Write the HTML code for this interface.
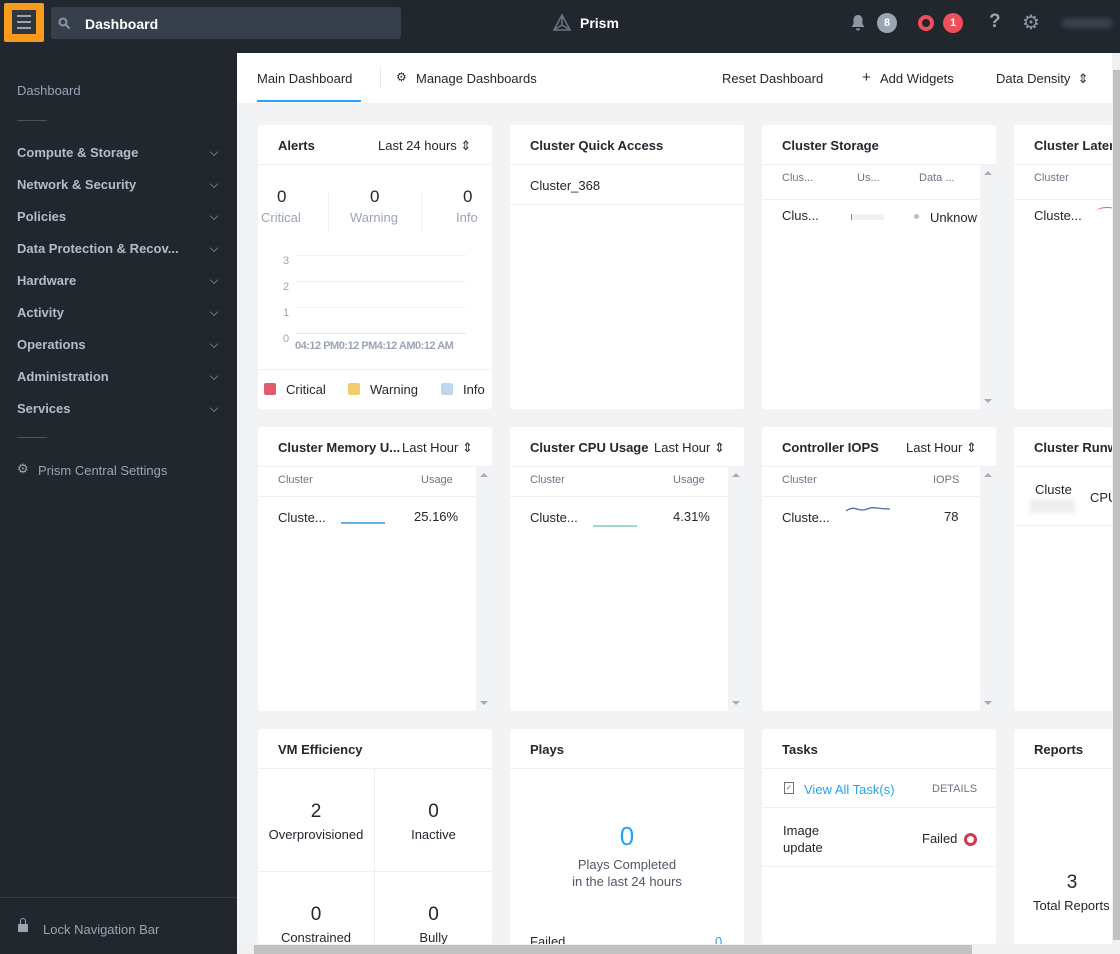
<!DOCTYPE html>
<html><head><meta charset="utf-8"><style>
*{box-sizing:border-box;margin:0;padding:0}
body{width:1120px;height:954px;overflow:hidden;font-family:"Liberation Sans",sans-serif;background:#f2f3f5;position:relative;font-size:13px;color:#22272e}
.a{position:absolute}
.top{left:0;top:0;width:1120px;height:53px;background:#22272e}
.side{position:absolute;left:0;top:46px;width:237px;height:908px;background:#22272e}
.side .it{position:absolute;left:17px;color:#b2bccb;font-size:13px;font-weight:bold;width:205px}
.side .it:after{content:"";position:absolute;right:5px;top:4px;width:5px;height:5px;border-right:1.3px solid #6b7583;border-bottom:1.3px solid #6b7583;transform:rotate(45deg)}
.card{position:absolute;background:#fff;border-radius:3px;overflow:hidden}
.card .h{position:absolute;left:20px;top:13px;font-size:13px;font-weight:bold;color:#22272e;white-space:nowrap}
.card .hl{position:absolute;left:0;right:0;top:39px;height:1px;background:#eef0f2}
.grey{color:#6b7583}
.sb{position:absolute;width:16px;background:#f2f3f5}
.sb:before{content:"";position:absolute;left:4px;top:6px;border:4px solid transparent;border-bottom:4px solid #aab;border-top:0}
.sb:after{content:"";position:absolute;left:4px;bottom:6px;border:4px solid transparent;border-top:4px solid #aab;border-bottom:0}
</style></head><body>
<div class="a top"></div>
<div class="a" style="left:4px;top:3px;width:40px;height:39px;background:#f89b1c;border-radius:2px"></div>
<div class="a" style="left:12px;top:10px;width:24px;height:24px;background:#303640"></div>
<div class="a" style="left:17px;top:15px;width:14px;height:2px;background:#9aa5b4;box-shadow:0 6px 0 #9aa5b4,0 12px 0 #9aa5b4"></div>
<div class="a" style="left:51px;top:7px;width:350px;height:32px;background:#373f4a;border-radius:3px"></div>
<svg class="a" style="left:58px;top:17px" width="13" height="13"><circle cx="5" cy="5" r="3.5" stroke="#8d96a3" stroke-width="2" fill="none"/><line x1="8" y1="8" x2="11.5" y2="11.5" stroke="#8d96a3" stroke-width="2"/></svg>
<div class="a" style="left:85px;top:16px;color:#fff;font-size:14px;font-weight:bold">Dashboard</div>
<svg class="a" style="left:552px;top:13px" width="20" height="20"><path d="M10 2 L2 17 L18 17 Z M10 2 L10 12 L2 17 M10 12 L18 17" stroke="#6b7583" stroke-width="1.5" fill="none"/></svg>
<div class="a" style="left:580px;top:15px;color:#fff;font-size:14px;font-weight:bold">Prism</div>
<svg class="a" style="left:850px;top:14px" width="16" height="17"><path d="M8 1C5 1 3.5 3.5 3.5 6V10L1.5 13H14.5L12.5 10V6C12.5 3.5 11 1 8 1Z M6 14.5a2 2 0 0 0 4 0Z" fill="#8d96a3"/></svg>
<div class="a" style="left:877px;top:13px;width:20px;height:20px;border-radius:50%;background:#9aa5b4;color:#fff;font-size:11px;font-weight:bold;text-align:center;line-height:20px">8</div>
<div class="a" style="left:918px;top:15px;width:16px;height:16px;border-radius:50%;border:4px solid #ef4f5a"></div>
<div class="a" style="left:943px;top:13px;width:20px;height:20px;border-radius:50%;background:#ef4f5a;color:#fff;font-size:11px;font-weight:bold;text-align:center;line-height:20px">1</div>
<div class="a" style="left:989px;top:11px;color:#9aa5b4;font-size:19px;font-weight:bold">?</div>
<div class="a" style="left:1022px;top:10px;color:#8d96a3;font-size:20px">⚙</div>
<div class="a" style="left:1062px;top:18px;width:50px;height:10px;background:#3a414c;border-radius:4px;filter:blur(2px)"></div>

<div class="side">
<div class="it" style="top:99px">Compute &amp; Storage</div>
<div class="it" style="top:131px">Network &amp; Security</div>
<div class="it" style="top:163px">Policies</div>
<div class="it" style="top:195px">Data Protection &amp; Recov...</div>
<div class="it" style="top:227px">Hardware</div>
<div class="it" style="top:259px">Activity</div>
<div class="it" style="top:291px">Operations</div>
<div class="it" style="top:323px">Administration</div>
<div class="it" style="top:355px">Services</div>
</div>
<div class="a" style="left:17px;top:83px;color:#9aa5b4;font-size:13px">Dashboard</div>
<div class="a" style="left:17px;top:120px;width:30px;height:1px;background:#4a525e"></div>
<div class="a" style="left:17px;top:437px;width:30px;height:1px;background:#4a525e"></div>
<div class="a" style="left:17px;top:461px;color:#9aa5b4;font-size:13px">⚙</div>
<div class="a" style="left:38px;top:463px;color:#9aa5b4;font-size:13px">Prism Central Settings</div>
<div class="a" style="left:0;top:897px;width:237px;height:1px;background:#353c47"></div>
<div class="a" style="left:18px;top:924px;width:10px;height:8px;background:#9aa5b4;border-radius:1px"></div>
<div class="a" style="left:20px;top:918px;width:6px;height:8px;border:1.5px solid #9aa5b4;border-radius:3px 3px 0 0"></div>
<div class="a" style="left:43px;top:922px;color:#9aa5b4;font-size:13px">Lock Navigation Bar</div>

<div class="a" style="left:237px;top:53px;width:875px;height:50px;background:#fff"></div>
<div class="a" style="left:257px;top:71px;font-size:13px">Main Dashboard</div>
<div class="a" style="left:257px;top:100px;width:104px;height:2px;background:#22a5f7"></div>
<div class="a" style="left:380px;top:68px;width:1px;height:20px;background:#e5e7ea"></div>
<div class="a" style="left:396px;top:70px;font-size:12px">⚙</div>
<div class="a" style="left:416px;top:71px;font-size:13px">Manage Dashboards</div>
<div class="a" style="left:722px;top:71px;font-size:13px">Reset Dashboard</div>
<div class="a" style="left:862px;top:69px;font-size:15px">+</div>
<div class="a" style="left:880px;top:71px;font-size:13px">Add Widgets</div>
<div class="a" style="left:996px;top:71px;font-size:13px">Data Density &nbsp;⇕</div>
<div class="a" style="left:1112px;top:53px;width:8px;height:901px;background:#f0f0f0"></div>
<div class="a" style="left:1113px;top:70px;width:7px;height:870px;background:#c1c1c1"></div>
<div class="a" style="left:237px;top:944px;width:875px;height:10px;background:#f0f0f0"></div>
<div class="a" style="left:254px;top:945px;width:718px;height:9px;background:#c1c1c1"></div>

<!-- row 1 -->
<div class="card" style="left:258px;top:125px;width:234px;height:284px">
<div class="h">Alerts</div><div class="a" style="left:120px;top:13px;font-size:13px">Last 24 hours ⇕</div><div class="hl"></div>
<div class="a" style="left:19px;top:62px;font-size:17px">0</div><div class="a grey" style="left:3px;top:85px;font-size:13px;color:#9aa5b4">Critical</div>
<div class="a" style="left:112px;top:62px;font-size:17px">0</div><div class="a" style="left:92px;top:85px;color:#9aa5b4">Warning</div>
<div class="a" style="left:205px;top:62px;font-size:17px">0</div><div class="a" style="left:198px;top:85px;color:#9aa5b4">Info</div>
<div class="a" style="left:70px;top:68px;width:1px;height:38px;background:#eef0f2"></div>
<div class="a" style="left:163px;top:68px;width:1px;height:38px;background:#eef0f2"></div>
<div class="a" style="left:25px;top:123px;font-size:11px;color:#9aa5b4;line-height:26px">3<br>2<br>1<br>0</div>
<div class="a" style="left:38px;top:130px;width:170px;height:1px;background:#f0f1f3;box-shadow:0 26px 0 #f0f1f3,0 52px 0 #f0f1f3,0 78px 0 #e5e7ea"></div>
<div class="a" style="left:37px;top:215px;font-size:11px;color:#9aa5b4;font-weight:bold;letter-spacing:-0.5px">04:12 PM0:12 PM4:12 AM0:12 AM</div>
<div class="hl" style="top:244px"></div>
<div class="a" style="left:6px;top:258px;width:12px;height:12px;background:#e05c6d;border-radius:2px"></div><div class="a" style="left:28px;top:257px">Critical</div>
<div class="a" style="left:90px;top:258px;width:12px;height:12px;background:#f2cd6e;border-radius:2px"></div><div class="a" style="left:112px;top:257px">Warning</div>
<div class="a" style="left:183px;top:258px;width:12px;height:12px;background:#c2d5ea;border-radius:2px"></div><div class="a" style="left:205px;top:257px">Info</div>
</div>
<div class="card" style="left:510px;top:125px;width:234px;height:284px">
<div class="h">Cluster Quick Access</div><div class="hl"></div>
<div class="a" style="left:20px;top:53px">Cluster_368</div><div class="hl" style="top:79px"></div></div>
<div class="card" style="left:762px;top:125px;width:234px;height:284px">
<div class="h">Cluster Storage</div><div class="hl"></div>
<div class="a grey" style="left:20px;top:47px;font-size:11px">Clus...</div><div class="a grey" style="left:95px;top:47px;font-size:11px">Us...</div><div class="a grey" style="left:157px;top:47px;font-size:11px">Data ...</div>
<div class="hl" style="top:74px;right:16px"></div>
<div class="a" style="left:20px;top:83px">Clus...</div><div class="a" style="left:89px;top:89px;width:33px;height:6px;background:#f0f1f3;border-left:1px solid #22a5f7"></div>
<div class="a" style="left:152px;top:89px;width:5px;height:5px;border-radius:50%;background:#b8bec8"></div><div class="a" style="left:168px;top:85px">Unknow</div>
<div class="sb" style="left:218px;top:40px;height:244px"></div></div>
<div class="card" style="left:1014px;top:125px;width:98px;height:284px">
<div class="h">Cluster Latency</div><div class="hl"></div>
<div class="a grey" style="left:20px;top:47px;font-size:11px">Cluster</div><div class="hl" style="top:74px"></div>
<div class="a" style="left:20px;top:83px">Cluste...</div>
<div class="a" style="left:83px;top:82px;width:20px;height:8px;border-top:1.5px solid #e05c6d;border-radius:50%"></div></div>

<!-- row 2 -->
<div class="card" style="left:258px;top:427px;width:234px;height:284px">
<div class="h">Cluster Memory U...</div><div class="a" style="left:144px;top:13px">Last Hour ⇕</div><div class="hl"></div>
<div class="a grey" style="left:20px;top:47px;font-size:11px">Cluster</div><div class="a grey" style="left:163px;top:47px;font-size:11px">Usage</div>
<div class="hl" style="top:69px;right:16px"></div>
<div class="a" style="left:20px;top:83px">Cluste...</div><div class="a" style="left:83px;top:95px;width:44px;height:2px;background:#5fb4ef"></div><div class="a" style="left:156px;top:82px">25.16%</div>
<div class="sb" style="left:218px;top:40px;height:244px"></div></div>
<div class="card" style="left:510px;top:427px;width:234px;height:284px">
<div class="h">Cluster CPU Usage</div><div class="a" style="left:144px;top:13px">Last Hour ⇕</div><div class="hl"></div>
<div class="a grey" style="left:20px;top:47px;font-size:11px">Cluster</div><div class="a grey" style="left:163px;top:47px;font-size:11px">Usage</div>
<div class="hl" style="top:69px;right:16px"></div>
<div class="a" style="left:20px;top:83px">Cluste...</div><div class="a" style="left:83px;top:98px;width:44px;height:2px;background:#9fdcc0"></div><div class="a" style="left:163px;top:82px">4.31%</div>
<div class="sb" style="left:218px;top:40px;height:244px"></div></div>
<div class="card" style="left:762px;top:427px;width:234px;height:284px">
<div class="h">Controller IOPS</div><div class="a" style="left:144px;top:13px">Last Hour ⇕</div><div class="hl"></div>
<div class="a grey" style="left:20px;top:47px;font-size:11px">Cluster</div><div class="a grey" style="left:171px;top:47px;font-size:11px">IOPS</div>
<div class="hl" style="top:69px;right:16px"></div>
<div class="a" style="left:20px;top:83px">Cluste...</div>
<svg class="a" style="left:83px;top:78px" width="46" height="10"><path d="M1 6 Q6 2 12 4 T22 4 T32 3 T45 4" stroke="#4f6bb3" stroke-width="1.3" fill="none"/></svg>
<div class="a" style="left:182px;top:82px">78</div>
<div class="sb" style="left:218px;top:40px;height:244px"></div></div>
<div class="card" style="left:1014px;top:427px;width:98px;height:284px">
<div class="h">Cluster Runway</div><div class="hl"></div>
<div class="a" style="left:21px;top:55px">Cluste</div><div class="a" style="left:16px;top:72px;width:45px;height:14px;background:#eee;filter:blur(2px)"></div><div class="a" style="left:76px;top:63px">CPU</div>
<div class="hl" style="top:98px"></div></div>

<!-- row 3 -->
<div class="card" style="left:258px;top:729px;width:234px;height:215px">
<div class="h">VM Efficiency</div><div class="hl"></div>
<div class="a" style="left:116px;top:40px;width:1px;height:180px;background:#eef0f2"></div><div class="hl" style="top:142px"></div>
<div class="a" style="left:0;top:72px;width:116px;text-align:center;font-size:19px">2</div><div class="a" style="left:0;top:98px;width:116px;text-align:center">Overprovisioned</div>
<div class="a" style="left:117px;top:72px;width:117px;text-align:center;font-size:19px">0</div><div class="a" style="left:117px;top:98px;width:117px;text-align:center">Inactive</div>
<div class="a" style="left:0;top:175px;width:116px;text-align:center;font-size:19px">0</div><div class="a" style="left:0;top:201px;width:116px;text-align:center">Constrained</div>
<div class="a" style="left:117px;top:175px;width:117px;text-align:center;font-size:19px">0</div><div class="a" style="left:117px;top:201px;width:117px;text-align:center">Bully</div></div>
<div class="card" style="left:510px;top:729px;width:234px;height:215px">
<div class="h">Plays</div><div class="hl"></div>
<div class="a" style="left:0;top:92px;width:234px;text-align:center;font-size:26px;color:#22a5f7">0</div>
<div class="a" style="left:0;top:127px;width:234px;text-align:center;color:#4f5866;line-height:17px">Plays Completed<br>in the last 24 hours</div>
<div class="a" style="left:20px;top:205px">Failed</div><div class="a" style="left:205px;top:205px;color:#22a5f7">0</div></div>
<div class="card" style="left:762px;top:729px;width:234px;height:215px">
<div class="h">Tasks</div><div class="hl"></div>
<div class="a" style="left:22px;top:53px;width:10px;height:12px;border:1px solid #6b7583;font-size:8px;line-height:9px;text-align:center;color:#6b7583">✓</div>
<div class="a" style="left:42px;top:53px;color:#22a5f7">View All Task(s)</div><div class="a grey" style="left:170px;top:54px;font-size:11px">DETAILS</div>
<div class="hl" style="top:78px"></div>
<div class="a" style="left:21px;top:93px;line-height:17px">Image<br>update</div><div class="a" style="left:160px;top:102px">Failed</div>
<div class="a" style="left:202px;top:104px;width:13px;height:13px;border-radius:50%;border:3px solid #d0394a"></div>
<div class="hl" style="top:137px"></div></div>
<div class="card" style="left:1014px;top:729px;width:98px;height:215px">
<div class="h">Reports</div><div class="hl"></div>
<div class="a" style="left:0;top:143px;width:116px;text-align:center;font-size:19px">3</div><div class="a" style="left:19px;top:169px;white-space:nowrap">Total Reports</div></div>
</body></html>
